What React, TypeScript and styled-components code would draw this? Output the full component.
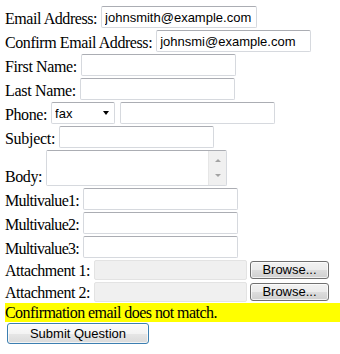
import styled, { createGlobalStyle } from "styled-components";

const Global = createGlobalStyle`
  html, body {
    margin: 0;
    padding: 0;
    background: #fff;
  }
  body {
    font-family: "Liberation Serif", "Times New Roman", serif;
    font-size: 16px;
    color: #000;
  }
`;

const Form = styled.form`
  display: flex;
  flex-direction: column;
  padding: 5px 0 0 5px;
  width: 335px;
`;

const Row = styled.div<{ $h?: number }>`
  display: flex;
  align-items: flex-end;
  height: ${p => p.$h ?? 24}px;
`;

const Label = styled.label<{ $track: number }>`
  line-height: 18px;
  margin: 0 4px 1px 0;
  letter-spacing: ${p => p.$track}px;
  white-space: nowrap;
`;

const Field = styled.div<{ $gap?: number }>`
  display: flex;
  align-items: center;
  height: 100%;
  gap: ${p => p.$gap ?? 5}px;
`;

const TextInput = styled.input<{ $w?: number }>`
  box-sizing: border-box;
  width: ${p => p.$w ?? 155}px;
  height: 22px;
  margin: 0;
  padding: 0 3px;
  border: 1px solid #d6d9de;
  border-top-color: #abadb3;
  border-radius: 2px;
  font: 13px "Liberation Sans", Arial, sans-serif;
  color: #000;
  background: #fff;
  outline: none;
`;

const SelectWrap = styled.div`
  position: relative;
  width: 64px;
  height: 22px;
`;

const Select = styled.select`
  box-sizing: border-box;
  width: 100%;
  height: 100%;
  margin: 0;
  padding: 0 0 0 3px;
  appearance: none;
  border: 1px solid #d6d9de;
  border-top-color: #abadb3;
  border-radius: 2px;
  font: 13px "Liberation Sans", Arial, sans-serif;
  color: #000;
  background: #fff;
  outline: none;
`;

const Caret = styled.span`
  position: absolute;
  right: 6px;
  top: 9px;
  width: 0;
  height: 0;
  border-left: 3.5px solid transparent;
  border-right: 3.5px solid transparent;
  border-top: 4px solid #000;
  pointer-events: none;
`;

const AreaBox = styled.div`
  box-sizing: border-box;
  display: flex;
  width: 181px;
  height: 36px;
  margin-bottom: 1px;
  border: 1px solid #d6d9de;
  border-top-color: #abadb3;
  border-radius: 2px;
  background: #fff;
`;

const Area = styled.textarea`
  flex: 1;
  border: 0;
  margin: 0;
  padding: 2px;
  resize: none;
  outline: none;
  overflow: hidden;
  font: 13px "Liberation Sans", Arial, sans-serif;
`;

const Scroll = styled.div`
  width: 17px;
  background: #f0f0f0;
  border-left: 1px solid #e6e6e6;
  display: flex;
  flex-direction: column;
  justify-content: space-between;
  align-items: center;
  padding: 8px 0 8px;
`;

const Arrow = styled.span<{ $down?: boolean }>`
  width: 0;
  height: 0;
  border-left: 3px solid transparent;
  border-right: 3px solid transparent;
  ${p =>
    p.$down
      ? "border-top: 3px solid #a3a3a3;"
      : "border-bottom: 3px solid #a3a3a3;"}
`;

const FileBox = styled.div`
  box-sizing: border-box;
  width: 153px;
  height: 20px;
  border: 1px solid #e3e3e3;
  border-radius: 2px;
  background: #f0f0f0;
`;

const Button = styled.button<{ $focus?: boolean }>`
  box-sizing: border-box;
  margin: 0;
  padding: 0;
  font: 13px "Liberation Sans", Arial, sans-serif;
  color: #000;
  border-radius: 3px;
  border: 1px solid ${p => (p.$focus ? "#3c7fb1" : "#707070")};
  background: ${p =>
    p.$focus
      ? "linear-gradient(#fbfbfb 0%, #f3f3f3 50%, #e6e6e6 51%, #dadada 100%)"
      : "linear-gradient(#f2f2f2 0%, #ebebeb 50%, #dddddd 51%, #cfcfcf 100%)"};
  box-shadow: inset 0 0 0 1px rgba(255, 255, 255, 0.7);
`;

const Browse = styled(Button)`
  width: 79px;
  height: 18px;
  line-height: 16px;
`;

const Alert = styled.div`
  background: #ffff00;
  height: 19px;
  line-height: 19px;
  letter-spacing: -0.55px;
  white-space: nowrap;
`;

const Submit = styled(Button)`
  width: 142px;
  height: 21px;
  margin: 1px 0 0 2px;
  align-self: flex-start;
`;

const text = [
  { label: "First Name:", track: -0.38 },
  { label: "Last Name:", track: -0.32 },
];

const multi = [
  { label: "Multivalue1:", track: -0.72 },
  { label: "Multivalue2:", track: -0.72 },
  { label: "Multivalue3:", track: -0.72 },
];

export default function App() {
  return (
    <>
      <Global />
      <Form onSubmit={e => e.preventDefault()}>
        <Row>
          <Label $track={-0.44}>Email Address:</Label>
          <Field>
            <TextInput $w={156} defaultValue="johnsmith@example.com" />
          </Field>
        </Row>
        <Row>
          <Label $track={-0.42}>Confirm Email Address:</Label>
          <Field>
            <TextInput $w={155} defaultValue="johnsmi@example.com" />
          </Field>
        </Row>
        {text.map(t => (
          <Row key={t.label}>
            <Label $track={t.track}>{t.label}</Label>
            <Field>
              <TextInput />
            </Field>
          </Row>
        ))}
        <Row>
          <Label $track={-0.4}>Phone:</Label>
          <Field>
            <SelectWrap>
              <Select defaultValue="fax">
                <option value="home">home</option>
                <option value="work">work</option>
                <option value="fax">fax</option>
              </Select>
              <Caret />
            </SelectWrap>
            <TextInput />
          </Field>
        </Row>
        <Row>
          <Label $track={-0.3}>Subject:</Label>
          <Field>
            <TextInput />
          </Field>
        </Row>
        <Row $h={38}>
          <Label $track={-0.42}>Body:</Label>
          <AreaBox>
            <Area />
            <Scroll>
              <Arrow />
              <Arrow $down />
            </Scroll>
          </AreaBox>
        </Row>
        {multi.map(m => (
          <Row key={m.label}>
            <Label $track={m.track}>{m.label}</Label>
            <Field>
              <TextInput />
            </Field>
          </Row>
        ))}
        {["Attachment 1:", "Attachment 2:"].map(a => (
          <Row key={a} $h={22}>
            <Label $track={-0.47}>{a}</Label>
            <Field $gap={3}>
              <FileBox />
              <Browse type="button">Browse...</Browse>
            </Field>
          </Row>
        ))}
        <Alert>Confirmation email does not match.</Alert>
        <Submit type="submit" $focus>
          Submit Question
        </Submit>
      </Form>
    </>
  );
}
